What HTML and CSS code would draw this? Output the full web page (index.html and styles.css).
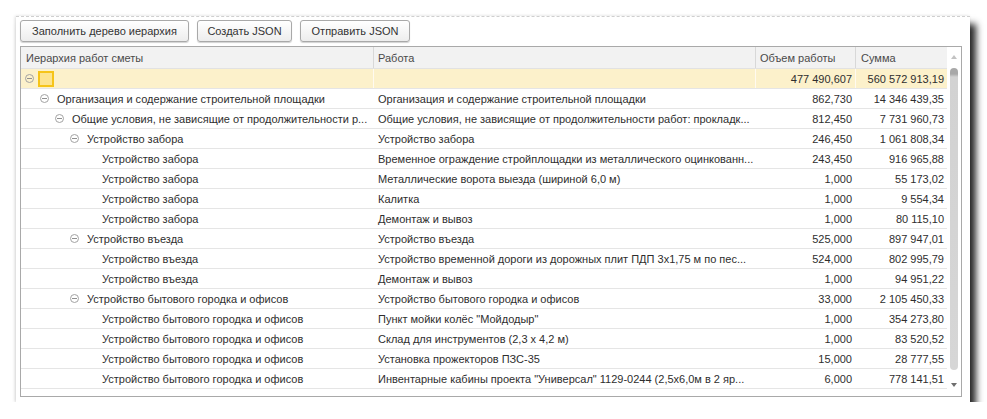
FILE: index.html
```html
<!DOCTYPE html>
<html lang="ru">
<head>
<meta charset="utf-8">
<title>Иерархия работ сметы</title>
<link rel="stylesheet" href="styles.css">
</head>
<body>
<div class="window">
  <div class="toolbar">
    <button class="btn btn-fill">Заполнить дерево иерархия</button>
    <button class="btn btn-create">Создать JSON</button>
    <button class="btn btn-send">Отправить JSON</button>
  </div>
  <div class="grid">
    <div class="main">
      <div class="row head">
        <div class="c c1">Иерархия работ сметы</div>
        <div class="c c2">Работа</div>
        <div class="c c3">Объем работы</div>
        <div class="c c4">Сумма</div>
      </div>
      <div class="row sel">
        <div class="c c1 l0"><span class="tg"></span><span class="sq"></span></div>
        <div class="c c2"></div>
        <div class="c c3 num">477 490,607</div>
        <div class="c c4 num">560 572 913,19</div>
      </div>
      <div class="row">
        <div class="c c1 l1"><span class="tg"></span><span class="t">Организация и содержание строительной площадки</span></div>
        <div class="c c2">Организация и содержание строительной площадки</div>
        <div class="c c3 num">862,730</div>
        <div class="c c4 num">14 346 439,35</div>
      </div>
      <div class="row">
        <div class="c c1 l2"><span class="tg"></span><span class="t">Общие условия, не зависящие от продолжительности р...</span></div>
        <div class="c c2">Общие условия, не зависящие от продолжительности работ: прокладк...</div>
        <div class="c c3 num">812,450</div>
        <div class="c c4 num">7 731 960,73</div>
      </div>
      <div class="row">
        <div class="c c1 l3"><span class="tg"></span><span class="t">Устройство забора</span></div>
        <div class="c c2">Устройство забора</div>
        <div class="c c3 num">246,450</div>
        <div class="c c4 num">1 061 808,34</div>
      </div>
      <div class="row">
        <div class="c c1 l4"><span class="sp"></span><span class="t">Устройство забора</span></div>
        <div class="c c2">Временное ограждение стройплощадки из металлического оцинкованн...</div>
        <div class="c c3 num">243,450</div>
        <div class="c c4 num">916 965,88</div>
      </div>
      <div class="row">
        <div class="c c1 l4"><span class="sp"></span><span class="t">Устройство забора</span></div>
        <div class="c c2">Металлические ворота выезда (шириной 6,0 м)</div>
        <div class="c c3 num">1,000</div>
        <div class="c c4 num">55 173,02</div>
      </div>
      <div class="row">
        <div class="c c1 l4"><span class="sp"></span><span class="t">Устройство забора</span></div>
        <div class="c c2">Калитка</div>
        <div class="c c3 num">1,000</div>
        <div class="c c4 num">9 554,34</div>
      </div>
      <div class="row">
        <div class="c c1 l4"><span class="sp"></span><span class="t">Устройство забора</span></div>
        <div class="c c2">Демонтаж и вывоз</div>
        <div class="c c3 num">1,000</div>
        <div class="c c4 num">80 115,10</div>
      </div>
      <div class="row">
        <div class="c c1 l3"><span class="tg"></span><span class="t">Устройство въезда</span></div>
        <div class="c c2">Устройство въезда</div>
        <div class="c c3 num">525,000</div>
        <div class="c c4 num">897 947,01</div>
      </div>
      <div class="row">
        <div class="c c1 l4"><span class="sp"></span><span class="t">Устройство въезда</span></div>
        <div class="c c2">Устройство временной дороги из дорожных плит ПДП 3х1,75 м по пес...</div>
        <div class="c c3 num">524,000</div>
        <div class="c c4 num">802 995,79</div>
      </div>
      <div class="row">
        <div class="c c1 l4"><span class="sp"></span><span class="t">Устройство въезда</span></div>
        <div class="c c2">Демонтаж и вывоз</div>
        <div class="c c3 num">1,000</div>
        <div class="c c4 num">94 951,22</div>
      </div>
      <div class="row">
        <div class="c c1 l3"><span class="tg"></span><span class="t">Устройство бытового городка и офисов</span></div>
        <div class="c c2">Устройство бытового городка и офисов</div>
        <div class="c c3 num">33,000</div>
        <div class="c c4 num">2 105 450,33</div>
      </div>
      <div class="row">
        <div class="c c1 l4"><span class="sp"></span><span class="t">Устройство бытового городка и офисов</span></div>
        <div class="c c2">Пункт мойки колёс "Мойдодыр"</div>
        <div class="c c3 num">1,000</div>
        <div class="c c4 num">354 273,80</div>
      </div>
      <div class="row">
        <div class="c c1 l4"><span class="sp"></span><span class="t">Устройство бытового городка и офисов</span></div>
        <div class="c c2">Склад для инструментов (2,3 х 4,2 м)</div>
        <div class="c c3 num">1,000</div>
        <div class="c c4 num">83 520,52</div>
      </div>
      <div class="row">
        <div class="c c1 l4"><span class="sp"></span><span class="t">Устройство бытового городка и офисов</span></div>
        <div class="c c2">Установка прожекторов ПЗС-35</div>
        <div class="c c3 num">15,000</div>
        <div class="c c4 num">28 777,55</div>
      </div>
      <div class="row">
        <div class="c c1 l4"><span class="sp"></span><span class="t">Устройство бытового городка и офисов</span></div>
        <div class="c c2">Инвентарные кабины проекта "Универсал" 1129-0244 (2,5х6,0м в 2 яр...</div>
        <div class="c c3 num">6,000</div>
        <div class="c c4 num">778 141,51</div>
      </div>
    </div>
    <div class="scroll">
      <div class="arrow up"></div>
      <div class="track"><div class="thumb"></div></div>
      <div class="arrow down"></div>
    </div>
  </div>
</div>
</body>
</html>
```

FILE: styles.css
```css
html, body {
  margin: 0;
  padding: 0;
  background: #ffffff;
}

body {
  font-family: "Liberation Sans", Arial, sans-serif;
  font-size: 11px;
  color: #2e2e2e;
}

.window {
  margin: 16px 0 0 16px;
  width: 954px;
  height: 386px;
  box-sizing: border-box;
  background: #ffffff;
  border-top: 1px dashed #cfcfcf;
  padding: 3px 8px 0 4px;
  box-shadow: 6px 8px 7px rgba(0, 0, 0, 0.85), -1px 0 3px rgba(0, 0, 0, 0.14);
}

.toolbar {
  display: flex;
  gap: 8px;
  height: 22px;
  margin-bottom: 4px;
}

.btn {
  height: 22px;
  box-sizing: border-box;
  border: 1px solid #a9a9a9;
  border-radius: 3px;
  background: linear-gradient(#ffffff, #ededed);
  box-shadow: 0 1px 1px rgba(0, 0, 0, 0.18);
  font-family: inherit;
  font-size: 11px;
  color: #333333;
  padding: 0;
  cursor: default;
}

.btn-fill { width: 169px; }
.btn-create { width: 95px; }
.btn-send { width: 110px; }

.grid {
  display: flex;
  width: 942px;
  height: 351px;
  box-sizing: border-box;
  border: 1px solid #a9a9a9;
}

.main {
  width: 926px;
  display: flex;
  flex-direction: column;
}

.row {
  display: flex;
  height: 20px;
  box-sizing: border-box;
  border-bottom: 1px solid #e5e5e5;
}

.row.head {
  height: 22px;
  background: #f2f2f2;
  border-bottom: 1px solid #e2e2e2;
  color: #4a4a4a;
}

.row.sel {
  background: #fcf1cb;
}

.c {
  display: flex;
  align-items: center;
  box-sizing: border-box;
  white-space: nowrap;
  overflow: hidden;
  border-right: 1px solid transparent;
}

.row.head .c {
  border-right-color: #d8d8d8;
}

.row.sel .c {
  border-right-color: #fffaf0;
}

.c1 { width: 353px; padding-left: 5px; }
.c2 { width: 382px; padding-left: 4px; }
.c3 { width: 100px; padding-left: 4px; padding-right: 3px; }
.c4 { width: 91px; padding-left: 5px; padding-right: 3px; border-right: none; }

.row.head .c4 { border-right: none; }

.num { justify-content: flex-end; }

.c1.l0 { padding-left: 1px; }
.c1.l1 { padding-left: 16px; }
.c1.l2 { padding-left: 31px; }
.c1.l3 { padding-left: 46px; }
.c1.l4 { padding-left: 61px; }

.tg, .sp {
  flex: none;
  width: 15px;
  height: 19px;
  position: relative;
}

.tg::before {
  content: "";
  position: absolute;
  left: 3px;
  top: 5px;
  width: 7px;
  height: 7px;
  border: 1px solid #a3a3a3;
  border-radius: 50%;
}

.tg::after {
  content: "";
  position: absolute;
  left: 5px;
  top: 9px;
  width: 5px;
  height: 1px;
  background: #8f8f8f;
}

.t {
  margin-left: 5px;
}

.sq {
  flex: none;
  width: 16px;
  height: 16px;
  margin-left: 1px;
  box-sizing: border-box;
  border: 2px solid #f6c419;
  background: #fde48f;
}

.scroll {
  width: 14px;
  display: flex;
  flex-direction: column;
  align-items: center;
}

.arrow {
  flex: none;
  width: 0;
  height: 0;
  border-left: 3px solid transparent;
  border-right: 3px solid transparent;
}

.arrow.up {
  margin-top: 8px;
  border-bottom: 4px solid #c2c2c2;
}

.arrow.down {
  margin-top: 7px;
  margin-bottom: 9px;
  border-top: 4px solid #6e6e6e;
}

.track {
  flex: 1;
  width: 100%;
  display: flex;
  justify-content: center;
  padding-top: 9px;
  box-sizing: border-box;
}

.thumb {
  width: 8px;
  height: 302px;
  border-radius: 4px;
  background: linear-gradient(#a8a8a8 0, #a8a8a8 6px, #d2d2d2 9px, #d6d6d6 100%);
}
```
